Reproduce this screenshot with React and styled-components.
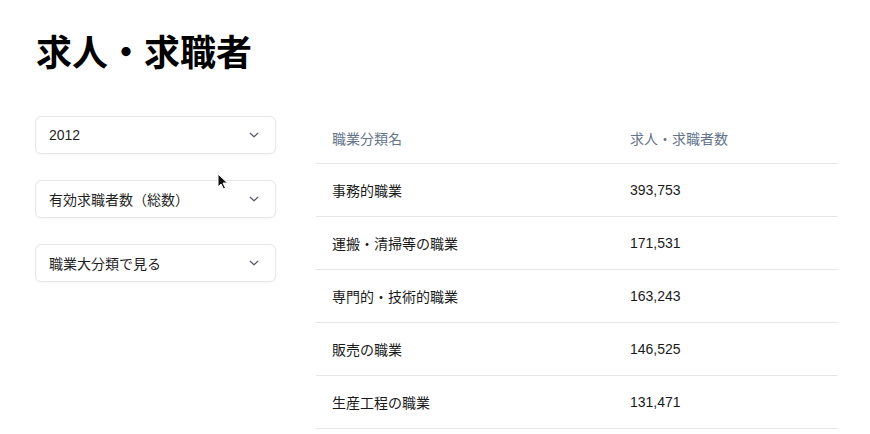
import React from "react"
import styled, { createGlobalStyle } from "styled-components"

const GlobalStyle = createGlobalStyle`
  body {
    margin: 0;
    background: #fff;
    font-family: "Liberation Sans", "Noto Sans CJK JP", sans-serif;
    color: #111;
  }
`

const Page = styled.div`
  padding: 32px 33px 0 35px;
  position: relative;
`

const Title = styled.h1`
  margin: 0 0 38px 1px;
  font-size: 36px;
  line-height: 43px;
  font-weight: 700;
  color: #000;
`

const Layout = styled.div`
  display: grid;
  grid-template-columns: 241px 1fr;
  column-gap: 40px;
  align-items: start;
`

const Sidebar = styled.div`
  display: flex;
  flex-direction: column;
  gap: 26px;
  padding-top: 3px;
`

const Select = styled.div`
  box-sizing: border-box;
  height: 38px;
  display: flex;
  align-items: center;
  justify-content: space-between;
  padding: 0 16px 0 13px;
  border: 1px solid #e5e7eb;
  border-radius: 6px;
  background: #fff;
  box-shadow: 0 1px 2px rgba(15, 23, 42, 0.04);
  font-size: 14px;
  color: #1f1f1f;
`

const Chevron = () => (
  <svg width="10" height="6" viewBox="0 0 10 6" fill="none">
    <path d="M1.2 1.2L5 4.8l3.8-3.6" stroke="#555b66" strokeWidth="1.2" strokeLinecap="round" strokeLinejoin="round" />
  </svg>
)

const Table = styled.table`
  width: 522px;
  border-collapse: collapse;
  font-size: 14px;
`

const Th = styled.th`
  height: 50px;
  padding: 0 16px;
  text-align: left;
  font-weight: 400;
  color: #64748b;
  border-bottom: 1.5px solid #e5e7eb;
  width: ${(p) => p.$w || "auto"};
  box-sizing: border-box;
`

const Td = styled.td`
  height: 52px;
  padding: 0 16px;
  color: #1a1a1a;
  border-bottom: 1.5px solid #e5e7eb;
`

const Cursor = styled.svg`
  position: absolute;
  left: 217px;
  top: 173px;
`

const rows = [
  ["事務的職業", "393,753"],
  ["運搬・清掃等の職業", "171,531"],
  ["専門的・技術的職業", "163,243"],
  ["販売の職業", "146,525"],
  ["生産工程の職業", "131,471"],
]

export default function App() {
  return (
    <Page>
      <GlobalStyle />
      <Title>求人・求職者</Title>
      <Layout>
        <Sidebar>
          {["2012", "有効求職者数（総数）", "職業大分類で見る"].map((label) => (
            <Select key={label}>
              <span>{label}</span>
              <Chevron />
            </Select>
          ))}
        </Sidebar>
        <Table>
          <thead>
            <tr>
              <Th $w="298px">職業分類名</Th>
              <Th>求人・求職者数</Th>
            </tr>
          </thead>
          <tbody>
            {rows.map(([name, value]) => (
              <tr key={name}>
                <Td>{name}</Td>
                <Td>{value}</Td>
              </tr>
            ))}
          </tbody>
        </Table>
      </Layout>
      <Cursor width="11" height="17" viewBox="0 0 11 17">
        <path d="M1 1v13l3-3 2.5 5 2-1-2.5-5h4.5z" fill="#111" stroke="#fff" strokeWidth="1" />
      </Cursor>
    </Page>
  )
}
